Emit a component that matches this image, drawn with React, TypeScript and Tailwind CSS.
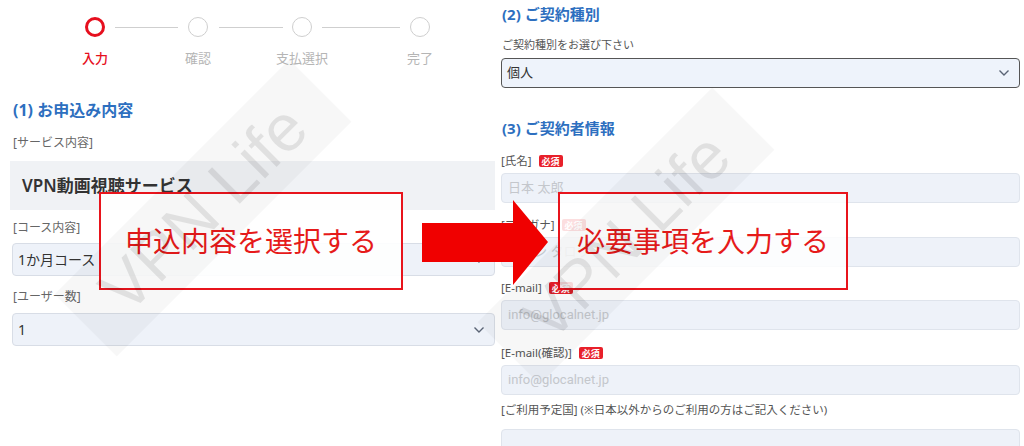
import React from "react";

const Chevron = () => (
  <svg width="12" height="8" viewBox="0 0 12 8" className="shrink-0">
    <polyline points="1.5,1.5 6,6 10.5,1.5" fill="none" stroke="#5a6475" strokeWidth="1.4" />
  </svg>
);

const Badge = () => (
  <span className="ml-[7px] inline-flex h-[12px] items-center rounded-[2px] bg-[#e8202a] px-[3px] text-[9px] font-bold leading-none text-white">
    必須
  </span>
);

const Field = ({
  label,
  required,
  placeholder,
  latin,
  mt,
}: {
  label: string;
  required?: boolean;
  placeholder: string;
  latin?: boolean;
  mt: string;
}) => (
  <div className={mt}>
    <div className="flex h-[16px] items-center text-[11.5px] text-[#555]">
      <span>{label}</span>
      {required && <Badge />}
    </div>
    <div className="mt-[4px] flex h-[30px] items-center rounded-[4px] border border-[#dfe4ec] bg-[#eef2f9] pl-[6px]">
      <span
        className={
          latin
            ? "font-['Roboto','Noto_Sans_CJK_JP',sans-serif] text-[13px] text-[#c4c7cc]"
            : "text-[13px] text-[#c4c7cc]"
        }
      >
        {placeholder}
      </span>
    </div>
  </div>
);

export default function App() {
  return (
    <div className="relative h-[446px] w-[1024px] overflow-hidden bg-white font-['Noto_Sans','Noto_Sans_CJK_JP',sans-serif]">
      <div className="flex">
        {/* Left panel */}
        <div className="flex w-[500px] flex-col pl-[12px] pr-[5px]">
          {/* stepper */}
          <div className="mt-[17px] ml-[73px] flex items-center">
            <div className="h-[20px] w-[20px] rounded-full border-[3px] border-[#e60f1e]" />
            <div className="ml-[10px] h-[1px] w-[63px] bg-[#cfcfcf]" />
            <div className="ml-[10px] h-[20px] w-[20px] rounded-full border border-[#cfcfcf]" />
            <div className="ml-[11px] h-[1px] w-[64px] bg-[#cfcfcf]" />
            <div className="ml-[9px] h-[20px] w-[20px] rounded-full border border-[#cfcfcf]" />
            <div className="ml-[10px] h-[1px] w-[78px] bg-[#cfcfcf]" />
            <div className="ml-[10px] h-[20px] w-[20px] rounded-full border border-[#cfcfcf]" />
          </div>
          <div className="mt-[12px] ml-[43px] flex text-[13px] leading-[18px]">
            <div className="w-[80px] text-center font-medium text-[#e60f1e]">入力</div>
            <div className="ml-[23px] w-[80px] text-center text-[#b5b5b5]">確認</div>
            <div className="ml-[24px] w-[80px] text-center text-[#b5b5b5]">支払選択</div>
            <div className="ml-[38px] w-[80px] text-center text-[#b5b5b5]">完了</div>
          </div>

          <div className="mt-[32px] pl-[1px] text-[16px] font-bold leading-[22px] text-[#2d6fbf]">
            (1) お申込み内容
          </div>
          <div className="mt-[14px] pl-[1px] text-[12px] leading-[16px] text-[#666]">[サービス内容]</div>
          <div className="mt-[10px] -ml-[2px] flex h-[49px] items-center bg-[#f0f2f5] pl-[12px] text-[17px] font-semibold text-[#333]">
            VPN動画視聴サービス
          </div>
          <div className="mt-[10px] pl-[1px] text-[12px] leading-[16px] text-[#666]">[コース内容]</div>
          <div className="mt-[7px] flex h-[33px] items-center justify-between rounded-[4px] border border-[#d8dde6] bg-[#eef2f9] pl-[5px] pr-[9px] text-[14px] text-[#333]">
            <span>1か月コース</span>
            <Chevron />
          </div>
          <div className="mt-[13px] pl-[1px] text-[12px] leading-[16px] text-[#666]">[ユーザー数]</div>
          <div className="mt-[8px] flex h-[33px] items-center justify-between rounded-[4px] border border-[#d8dde6] bg-[#eef2f9] pl-[5px] pr-[9px] text-[14px] text-[#333]">
            <span>1</span>
            <Chevron />
          </div>
        </div>

        {/* Right panel */}
        <div className="flex flex-1 flex-col pl-[1px] pr-[4px]">
          <div className="mt-[3px] pl-[1px] text-[15px] font-bold leading-[22px] text-[#2d6fbf]">(2) ご契約種別</div>
          <div className="mt-[12px] pl-[1px] text-[11px] leading-[15px] text-[#555]">ご契約種別をお選び下さい</div>
          <div className="mt-[6px] flex h-[30px] items-center justify-between rounded-[4px] border-[1.5px] border-[#555] bg-[#eef3fb] pl-[5px] pr-[9px] text-[13px] text-[#333]">
            <span>個人</span>
            <Chevron />
          </div>
          <div className="mt-[29px] pl-[1px] text-[15px] font-bold leading-[22px] text-[#2d6fbf]">(3) ご契約者情報</div>
          <Field mt="mt-[14px]" label="[氏名]" required placeholder="日本 太郎" />
          <Field mt="mt-[14px]" label="[フリガナ]" required placeholder="ニホン タロウ" />
          <Field mt="mt-[13px]" label="[E-mail]" required latin placeholder="info@glocalnet.jp" />
          <Field mt="mt-[15px]" label="[E-mail(確認)]" required latin placeholder="info@glocalnet.jp" />
          <div className="mt-[7px] flex h-[16px] items-center text-[11.5px] text-[#555]">
            [ご利用予定国] (※日本以外からのご利用の方はご記入ください)
          </div>
          <div className="mt-[11px] h-[30px] rounded-[4px] border border-[#dfe4ec] bg-[#eef2f9]" />
        </div>
      </div>

      {/* Overlay callouts */}
      <div className="absolute left-[99px] top-[192px] flex h-[98px] w-[304px] items-center justify-center border-2 border-[#e8141c] bg-white/90">
        <span className="text-[28px] leading-none text-[#e61a1a]">申込内容を選択する</span>
      </div>
      <svg className="absolute left-[420px] top-[198px]" width="140" height="90" viewBox="0 0 140 90">
        <polygon points="2,25 93,25 93,2 128,44 93,87 93,64 2,64" fill="#f00000" />
      </svg>
      <div className="absolute left-[558px] top-[192px] flex h-[98px] w-[290px] items-center justify-center border-2 border-[#e8141c] bg-white/85">
        <span className="text-[28px] leading-none text-[#e61a1a]">必要事項を入力する</span>
      </div>

      {/* Watermarks */}
      <div className="pointer-events-none absolute left-[37px] top-[164px] flex h-[88px] w-[332px] rotate-[-45deg] items-center justify-center bg-black/[0.03]">
        <span className="font-['Liberation_Sans',sans-serif] text-[66px] leading-none text-black/[0.09]">VPN Life</span>
      </div>
      <div className="pointer-events-none absolute left-[460px] top-[192px] flex h-[88px] w-[332px] rotate-[-45deg] items-center justify-center bg-black/[0.03]">
        <span className="font-['Liberation_Sans',sans-serif] text-[66px] leading-none text-black/[0.09]">VPN Life</span>
      </div>
    </div>
  );
}
